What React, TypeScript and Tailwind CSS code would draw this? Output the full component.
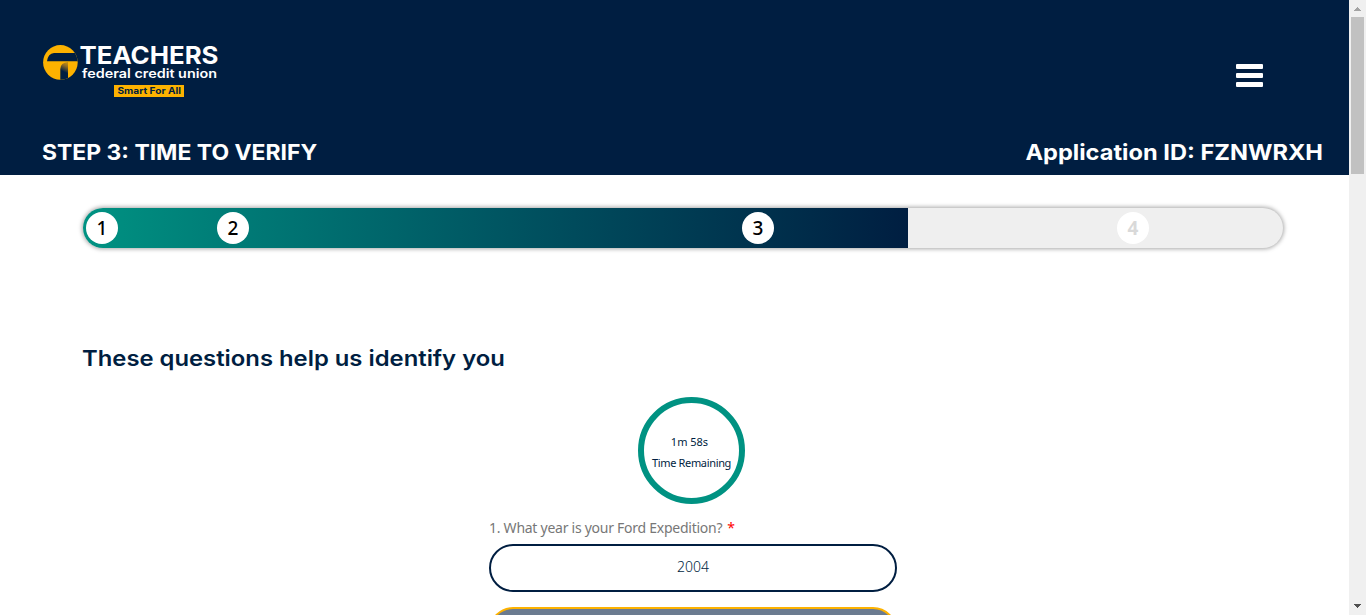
function Logo() {
  return (
    <svg className="overflow-visible" width="176" height="54" viewBox="42 44 176 54" role="img" aria-label="Teachers Federal Credit Union">
      <defs>
        <linearGradient id="stem" x1="0.6" y1="0" x2="0.4" y2="1">
          <stop offset="0" stopColor="#c08c12" />
          <stop offset="0.2" stopColor="#8d6b25" />
          <stop offset="0.55" stopColor="#001e41" />
        </linearGradient>
        <clipPath id="disc">
          <circle cx="60.4" cy="62.4" r="17.3" />
        </clipPath>
      </defs>
      <circle cx="60.4" cy="62.4" r="17.3" fill="#fdb200" />
      <g clipPath="url(#disc)">
        <path d="M47 61.3 Q48 53.5 54 53 H80 V61.3 Z" fill="#001e41" />
        <path d="M60.3 80 V69 Q60.5 62.5 68 62 V80 Z" fill="url(#stem)" />
      </g>
      <g fontFamily="Inter, sans-serif" fill="#fff">
        <text x="79.5" y="64" fontSize="24" fontWeight="700" textLength="139" lengthAdjust="spacingAndGlyphs">TEACHERS</text>
        <text x="82" y="77.6" fontSize="12.5" fontWeight="600" textLength="135" lengthAdjust="spacingAndGlyphs">federal credit union</text>
      </g>
      <rect x="114" y="85" width="70" height="12" fill="#fdb200" />
      <text x="117.5" y="94.4" fontFamily="Inter, sans-serif" fontSize="9" fontWeight="700" fill="#001e41" textLength="63.5" lengthAdjust="spacingAndGlyphs">Smart For All</text>
    </svg>
  );
}

function Header() {
  return (
    <header className="flex h-[175px] flex-col justify-between bg-[#001e41] text-white">
      <div className="flex items-start justify-between pt-11 pr-[86px] pl-[42px]">
        <Logo />
        <button aria-label="Menu" className="mt-[20px] flex w-[27px] flex-col gap-[4px]">
          <span className="h-[5px] w-full rounded-[1px] bg-white" />
          <span className="h-[5px] w-full rounded-[1px] bg-white" />
          <span className="h-[5px] w-full rounded-[1px] bg-white" />
        </button>
      </div>
      <div className="flex justify-between pr-[26px] pb-[8px] pl-[42px] text-[21.5px] leading-[30px] font-bold whitespace-nowrap">
        <h1 className="origin-left scale-x-[1.066]">STEP 3: TIME TO VERIFY</h1>
        <span className="origin-right scale-x-[1.098]">Application ID: FZNWRXH</span>
      </div>
    </header>
  );
}

function Step({ n, off }: { n: number; off?: boolean }) {
  return (
    <span
      className={
        "flex size-8 shrink-0 items-center justify-center rounded-full bg-white font-['Noto_Sans',sans-serif] text-[19px] leading-none " +
        (off ? "font-bold text-[#d9d9d9]" : "font-medium text-black")
      }
    >
      {n}
    </span>
  );
}

function Progress() {
  return (
    <div className="mt-[33px] ml-[83px] flex h-10 w-[1200px] overflow-hidden rounded-full bg-[#efefef] shadow-[0_0_4px_1px_rgba(0,0,0,0.35)]">
      <div className="flex w-[825px] items-center bg-linear-to-r from-[#009282] to-[#001e41] pl-[3px]">
        <Step n={1} />
        <div className="w-[99px]" />
        <Step n={2} />
        <div className="w-[493px]" />
        <Step n={3} />
      </div>
      <div className="flex items-center pl-[209px]">
        <Step n={4} off />
      </div>
    </div>
  );
}

function ScrollBar() {
  return (
    <div className="flex w-[17px] shrink-0 flex-col justify-between bg-[#f0f0f0]">
      <div className="flex flex-col items-center">
        <svg width="17" height="17" viewBox="0 0 17 17" shapeRendering="crispEdges">
          <path d="M8 7h1v1h1v1h1v1h1v1H5v-1h1V9h1V8h1z" fill="#a3a3a3" />
        </svg>
        <div className="h-[157px] w-[13px] bg-[#c1c1c1]" />
      </div>
      <svg width="17" height="17" viewBox="0 0 17 17" shapeRendering="crispEdges">
        <path d="M5 6h7v1h-1v1h-1v1H9v1H8V9H7V8H6V7H5z" fill="#505050" />
      </svg>
    </div>
  );
}

export default function App() {
  return (
    <div className="flex h-[615px] w-[1366px] overflow-hidden bg-white font-[Inter,sans-serif] text-[#001e41]">
      <div className="w-[1349px] shrink-0">
        <Header />
        <main>
          <Progress />
          <h2 className="mt-[95px] ml-[82px] w-max origin-left scale-x-[1.108] text-[21.5px] leading-[30px] font-semibold whitespace-nowrap">
            These questions help us identify you
          </h2>
          <div className="mt-[24px] ml-[638px] flex size-[107px] flex-col items-center justify-center rounded-full border-[6px] border-[#009282] pt-[2px] font-['Noto_Sans',sans-serif] text-[11px] leading-[21px] whitespace-nowrap">
            <span className="mr-1">1m 58s</span>
            <span className="tracking-[-0.34px]">Time Remaining</span>
          </div>
          <section className="mt-[14px] ml-[489px] w-[408px] font-['Noto_Sans',sans-serif]">
            <p className="-mt-px flex h-[22px] text-[14px] leading-[21px] tracking-[-0.26px] whitespace-nowrap text-[#777]">
              1. What year is your Ford Expedition?<span className="ml-[5px] text-[#f00]">*</span>
            </p>
            <button className="mt-[5px] block h-12 w-full rounded-full border-2 border-[#001e41] pb-[3px] text-center text-[14px] font-light text-[#001e41]">
              2004
            </button>
            <button className="mt-[15px] block h-12 w-full rounded-full border-2 border-[#fdb200] bg-[#6b7b90]" aria-label="Next answer" />
          </section>
        </main>
      </div>
      <ScrollBar />
    </div>
  );
}
